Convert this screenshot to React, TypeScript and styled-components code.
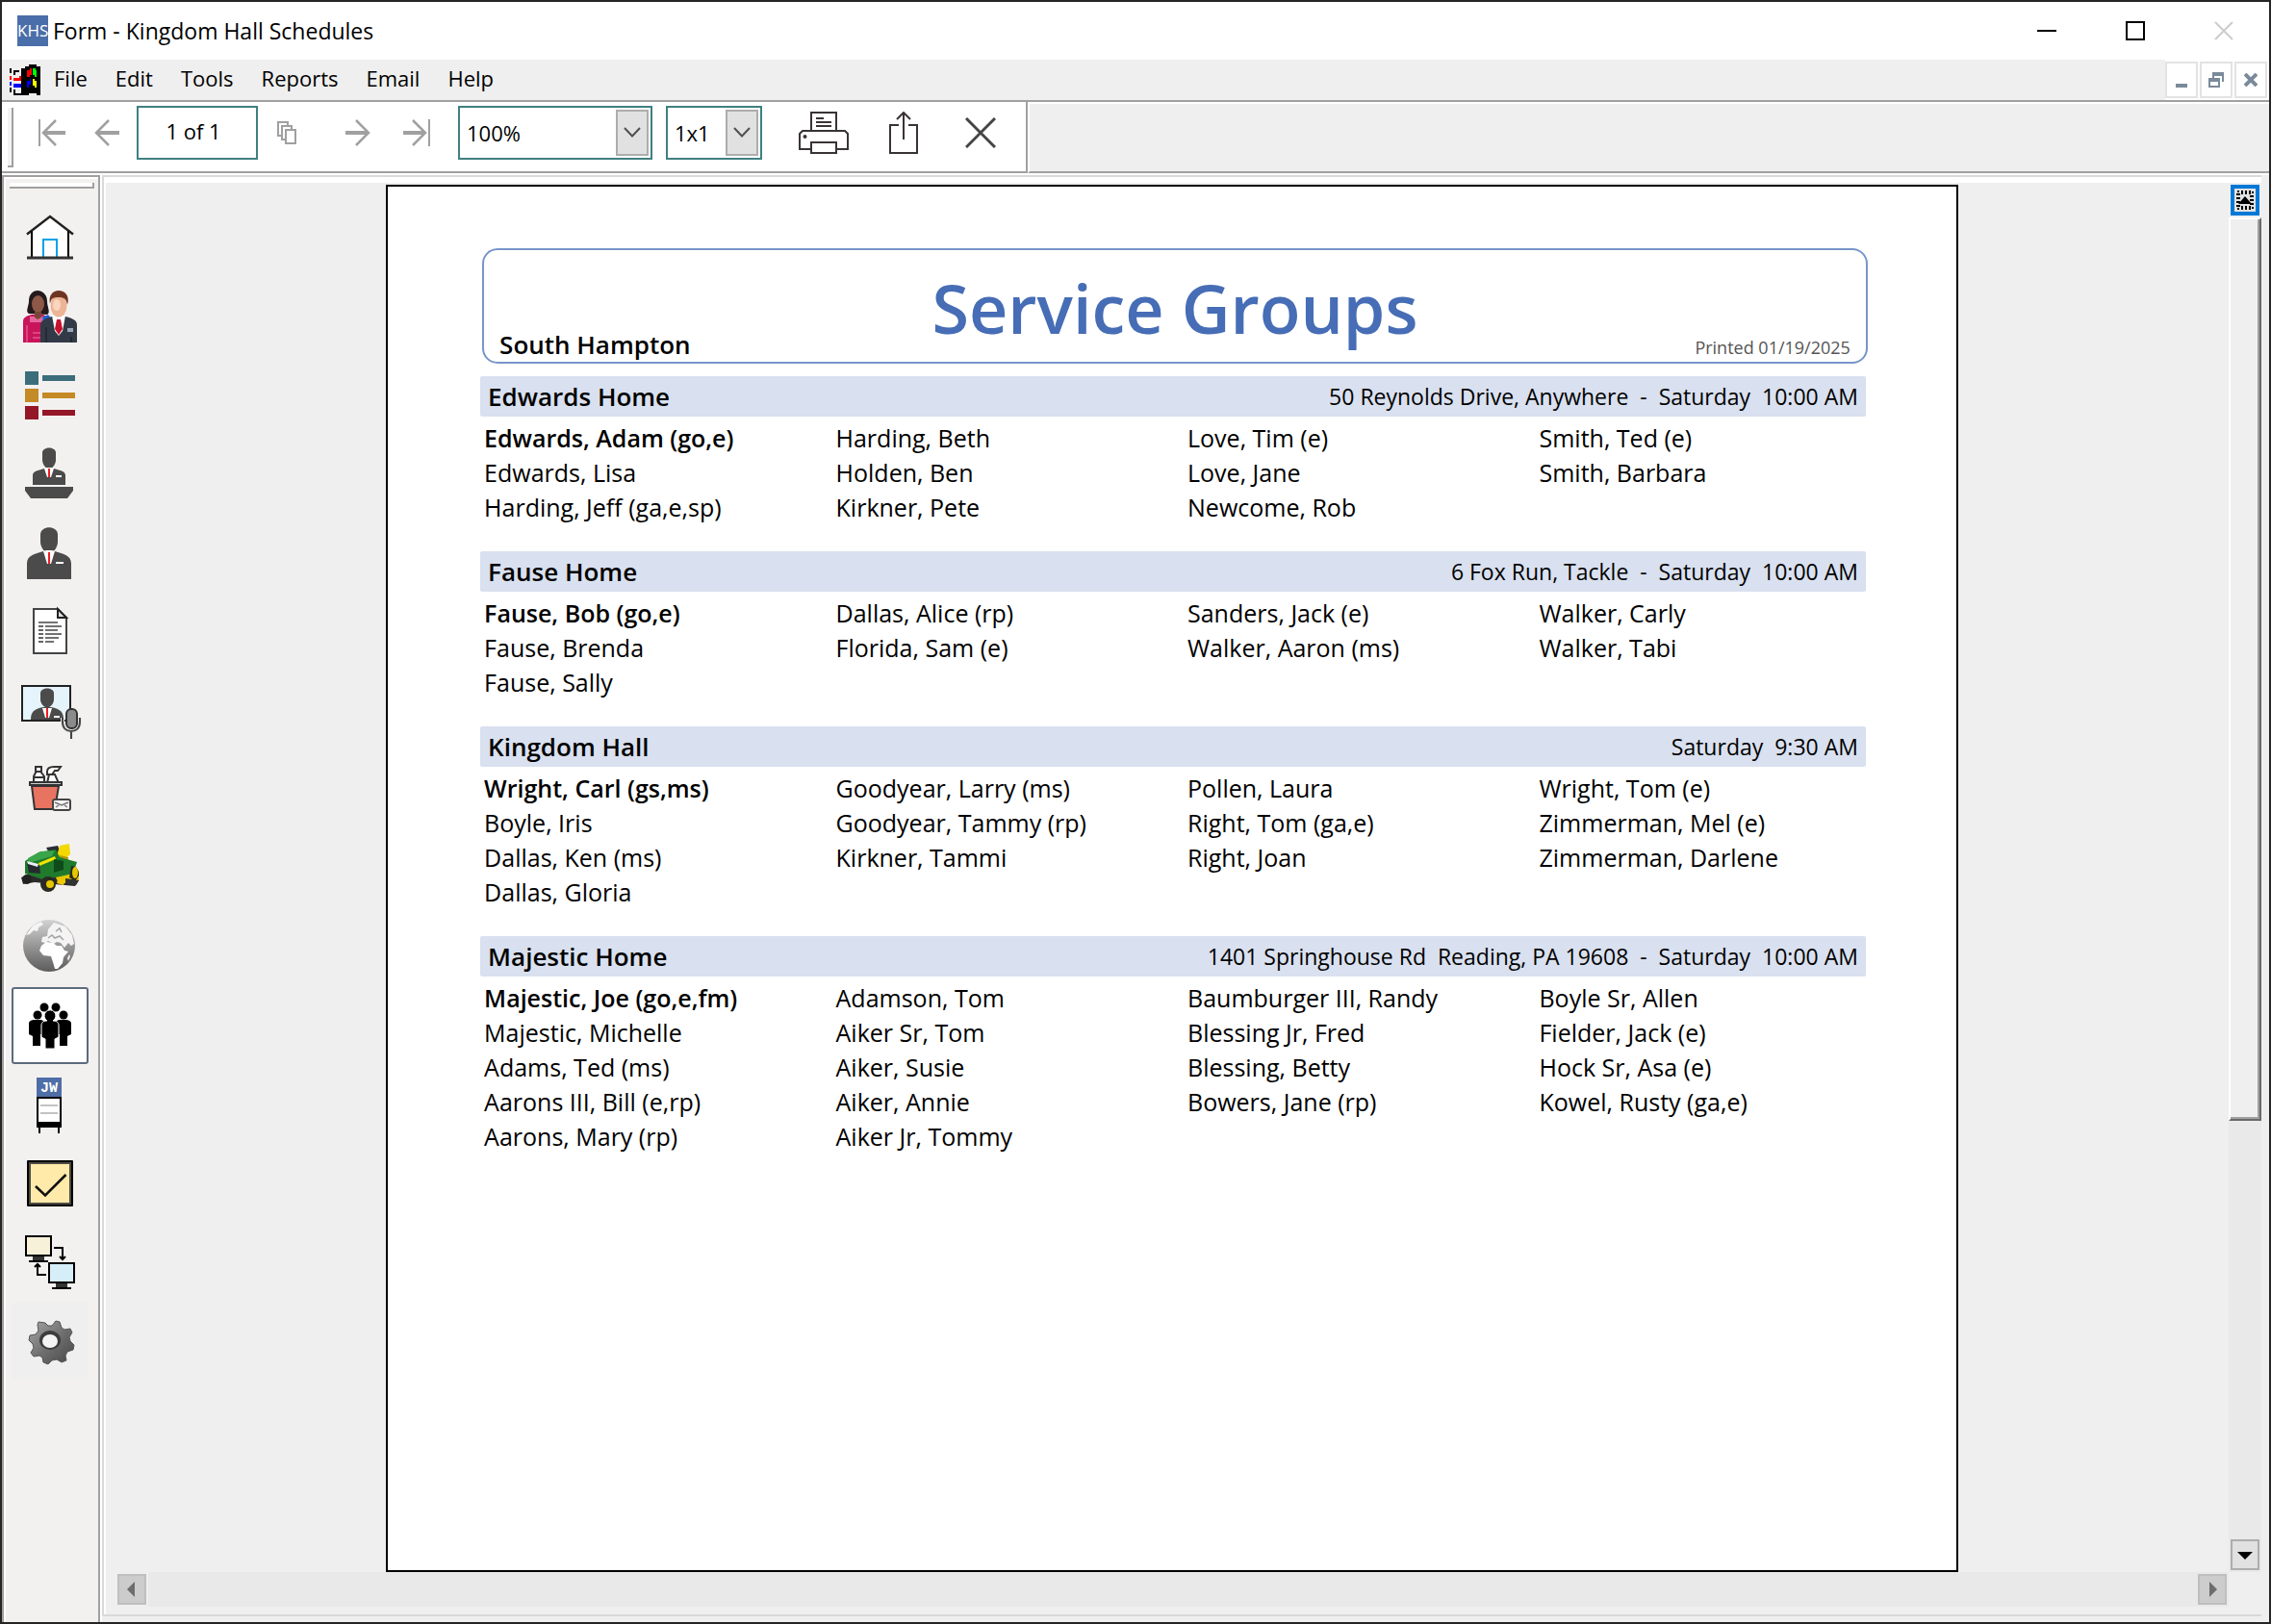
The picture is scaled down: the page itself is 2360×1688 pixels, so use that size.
import React from "react";
import styled, { createGlobalStyle, css } from "styled-components";

const GlobalStyle = createGlobalStyle`
  * { box-sizing: border-box; }
  body { margin: 0; background: #efefef; }
  body, button, input, select {
    font-family: "Open Sans", "Noto Sans", sans-serif;
    font-size: 23px;
    line-height: 32px;
    color: #000;
  }
  button, input, select { margin: 0; padding: 0; border: 0; border-radius: 0; background: transparent; }
  ul { list-style: none; margin: 0; padding: 0; }
  h1, h2, p { margin: 0; font-weight: inherit; }
  svg { display: block; }
`;

/* ---------- window frame ---------- */

const Window = styled.div`
  display: flex;
  flex-direction: column;
  height: 100vh;
  min-height: 1400px;
  border: 2px solid #262424;
  background: #efefef;
`;

const TitleBar = styled.header`
  display: flex;
  align-items: center;
  flex: none;
  height: 60px;
  padding: 0 1px 0 16px;
  background: #fff;
`;

const AppBadge = styled.span`
  display: grid;
  place-items: center;
  width: 32px;
  height: 32px;
  margin-right: 5px;
  background: #4a6ea9;
  color: #fff;
  font-size: 17px;
  line-height: 32px;
  overflow: hidden;
`;

const WindowTitle = styled.h1`
  flex: 1;
  font-size: 23px;
`;

const CaptionButton = styled.button`
  display: grid;
  place-items: center;
  width: 92px;
  height: 60px;
`;

const MenuBar = styled.nav`
  display: flex;
  align-items: center;
  flex: none;
  height: 42px;
  padding-left: 8px;
`;

const MenuItems = styled.div`
  display: flex;
  flex: 1;
  gap: 29px;
  margin-left: 14px;
  padding-bottom: 4px;
`;

const MenuButton = styled.button`
  font-size: 22px;
  line-height: 36px;
`;

const MdiButtons = styled.div`
  display: flex;
  gap: 2px;
  height: 42px;
  padding: 2px 2px 2px 0;
  background: #fff;
`;

const MdiButton = styled.button`
  display: grid;
  place-items: center;
  width: 34px;
  height: 38px;
  border: 2px solid #e3e3e3;
  background: #fff;
`;

/* ---------- toolbar ---------- */

const ToolStrip = styled.div`
  display: flex;
  flex: none;
  height: 78px;
  border-top: 2px solid #a0a0a0;
  border-bottom: 2px solid #fff;
`;

const ToolBar = styled.div`
  display: flex;
  padding: 4px 0 0 6px;
  background: #fff;
  border-right: 2px solid #a0a0a0;
  border-bottom: 2px solid #a0a0a0;
`;

const ToolFill = styled.div`
  flex: 1;
  border-top: 2px solid #fff;
  border-left: 2px solid #fff;
  border-bottom: 2px solid #a0a0a0;
`;

const ToolGrip = styled.span`
  width: 6px;
  height: 62px;
  margin: 2px 12px 0 0;
  border-right: 2px solid #a0a0a0;
  border-bottom: 2px solid #a0a0a0;
  background: #f3f3f3;
`;

const ToolButton = styled.button<{ $width: number; $gap?: number }>`
  display: grid;
  place-items: center;
  width: ${(p) => p.$width}px;
  height: 56px;
  margin-left: ${(p) => p.$gap ?? 0}px;
`;

const PageField = styled.input`
  width: 126px;
  height: 56px;
  padding: 0 8px 4px 0;
  border: 2px solid #408080;
  background: #fff;
  font-size: 22px;
  text-align: center;
`;

const Picker = styled.label<{ $width: number }>`
  display: grid;
  grid-template-columns: 1fr 34px 2px;
  align-items: center;
  width: ${(p) => p.$width}px;
  height: 56px;
  margin-right: 14px;
`;

const PickerSelect = styled.select`
  grid-area: 1 / 1 / 2 / 4;
  width: 100%;
  height: 56px;
  padding-left: 7px;
  border: 2px solid #408080;
  background: #fff;
  appearance: none;
  font-size: 22px;
`;

const PickerArrow = styled.span`
  grid-area: 1 / 2 / 2 / 3;
  display: grid;
  place-items: center;
  width: 34px;
  height: 48px;
  margin-left: -2px;
  border: 2px solid #adadad;
  background: #e1e1e1;
  pointer-events: none;
`;

/* ---------- body ---------- */

const Body = styled.div`
  display: flex;
  flex: 1;
  min-height: 0;
`;

const SideBar = styled.nav`
  display: flex;
  flex-direction: column;
  flex: none;
  width: 102px;
  margin-right: 2px;
  padding: 6px 0 0 4px;
  background: #f3f1f0;
  border: 2px solid #a0a0a0;
  border-bottom: 0;
  box-shadow: inset 2px 2px #fff, 2px 0 #fff;
`;

const SideGrip = styled.span`
  width: 88px;
  height: 6px;
  margin: 0 0 10px 2px;
  border-right: 2px solid #a0a0a0;
  border-bottom: 2px solid #a0a0a0;
  background: #fff;
`;

const SideItems = styled.ul`
  display: flex;
  flex-direction: column;
  gap: 2px;
  padding-left: 4px;
`;

const SideButton = styled.button<{ $state?: "selected" | "flat" }>`
  display: block;
  width: 80px;
  height: 80px;
  border-radius: 3px;
  ${(p) => p.$state === "selected" && css`
    background: #fff;
    box-shadow: inset 0 0 0 2px #5c6b7e;
  `}
  ${(p) => p.$state === "flat" && css`
    background: #efefef;
  `}
`;

const Workspace = styled.main`
  display: grid;
  flex: 1;
  grid-template-columns: 1fr 34px;
  grid-template-rows: 1fr 36px 8px;
  margin: 0 8px 6px 0;
  border-top: 2px solid #d9d9d9;
  border-left: 2px solid #d9d9d9;
  border-bottom: 2px solid #d9d9d9;
  box-shadow: inset 2px 6px #fff;
`;

const PaperArea = styled.div`
  display: flex;
  justify-content: center;
  padding: 8px 0 0 12px;
`;

const Paper = styled.article`
  width: 74.4%;
  border: 2px solid #000;
  background: #fff;
  padding: 64px 92px 0 96px;
`;

const VScroll = styled.div`
  display: flex;
  flex-direction: column;
  padding-bottom: 2px;
  margin-top: 6px;
  background: #e9e9e9;
`;

const VUpSlot = styled.div`
  padding: 2px;
  background: #efefef;
`;

const ScrollUp = styled.button`
  display: grid;
  place-items: center;
  width: 30px;
  height: 32px;
  border: 4px solid #0078d7;
  background: #e1e1e1;
`;

const VThumb = styled.div`
  flex: 938;
  border-top: 2px solid #fff;
  border-left: 2px solid #fff;
  border-right: 2px solid #696969;
  border-bottom: 2px solid #696969;
  box-shadow: inset -2px -2px #a0a0a0;
  background: #efefef;
`;

const VTrack = styled.div`
  flex: 436;
`;

const ScrollDown = styled.button`
  display: grid;
  place-items: center;
  width: 30px;
  height: 32px;
  margin-left: 2px;
  border: 2px solid #adadad;
  background: #e1e1e1;
`;

const HScroll = styled.div`
  display: flex;
  align-items: center;
  padding-left: 14px;
`;

const HTrack = styled.div`
  flex: 1;
  height: 36px;
  margin-left: 2px;
  background: #e9e9e9;
`;

const HButton = styled.button`
  display: grid;
  place-items: center;
  width: 30px;
  height: 32px;
  border: 2px solid #bfbfbf;
  background: #cccccc;
`;

const HEnd = styled.div`
  display: flex;
  align-items: center;
  height: 36px;
  padding-right: 2px;
  background: #e9e9e9;
`;

/* ---------- report ---------- */

const ReportHead = styled.header`
  display: grid;
  grid-template-columns: 1fr auto 1fr;
  align-items: end;
  height: 120px;
  margin: 0 0 13px 2px;
  padding: 0 16px;
  border: 2px solid #7895ca;
  border-radius: 16px;
`;

const Congregation = styled.p`
  font-size: 26px;
  font-weight: 600;
  line-height: 36px;
`;

const ReportTitle = styled.h2`
  margin-bottom: 8px;
  color: #466db5;
  font-size: 70px;
  font-weight: 600;
  line-height: 96px;
`;

const Printed = styled.p`
  color: #555;
  font-size: 18px;
  line-height: 30px;
  text-align: right;
`;

const Group = styled.section`
  margin: 0 2px 28px 0;
`;

const GroupBar = styled.header`
  display: flex;
  justify-content: space-between;
  align-items: center;
  height: 42px;
  margin-bottom: 4px;
  padding: 0 8px;
  border-radius: 2px;
  background: #d9e0ef;
`;

const GroupName = styled.h2`
  font-size: 26px;
  font-weight: 600;
`;

const GroupInfo = styled.p`
  font-size: 23px;
  white-space: pre;
`;

const GroupColumns = styled.div`
  display: grid;
  grid-template-columns: 365fr 365fr 365fr 339fr;
  padding-left: 4px;
`;

const Person = styled.li<{ $lead: boolean }>`
  font-size: 25px;
  font-weight: ${(p) => (p.$lead ? 600 : 400)};
  line-height: 36px;
  white-space: nowrap;
`;

/* ---------- data ---------- */

type GroupData = { name: string; info: string; columns: string[][] };

const groups: GroupData[] = [
  {
    name: "Edwards Home",
    info: "50 Reynolds Drive, Anywhere  -  Saturday  10:00 AM",
    columns: [
      ["Edwards, Adam (go,e)", "Edwards, Lisa", "Harding, Jeff (ga,e,sp)"],
      ["Harding, Beth", "Holden, Ben", "Kirkner, Pete"],
      ["Love, Tim (e)", "Love, Jane", "Newcome, Rob"],
      ["Smith, Ted (e)", "Smith, Barbara"],
    ],
  },
  {
    name: "Fause Home",
    info: "6 Fox Run, Tackle  -  Saturday  10:00 AM",
    columns: [
      ["Fause, Bob (go,e)", "Fause, Brenda", "Fause, Sally"],
      ["Dallas, Alice (rp)", "Florida, Sam (e)"],
      ["Sanders, Jack (e)", "Walker, Aaron (ms)"],
      ["Walker, Carly", "Walker, Tabi"],
    ],
  },
  {
    name: "Kingdom Hall",
    info: "Saturday  9:30 AM",
    columns: [
      ["Wright, Carl (gs,ms)", "Boyle, Iris", "Dallas, Ken (ms)", "Dallas, Gloria"],
      ["Goodyear, Larry (ms)", "Goodyear, Tammy (rp)", "Kirkner, Tammi"],
      ["Pollen, Laura", "Right, Tom (ga,e)", "Right, Joan"],
      ["Wright, Tom (e)", "Zimmerman, Mel (e)", "Zimmerman, Darlene"],
    ],
  },
  {
    name: "Majestic Home",
    info: "1401 Springhouse Rd  Reading, PA 19608  -  Saturday  10:00 AM",
    columns: [
      ["Majestic, Joe (go,e,fm)", "Majestic, Michelle", "Adams, Ted (ms)", "Aarons III, Bill (e,rp)", "Aarons, Mary (rp)"],
      ["Adamson, Tom", "Aiker Sr, Tom", "Aiker, Susie", "Aiker, Annie", "Aiker Jr, Tommy"],
      ["Baumburger III, Randy", "Blessing Jr, Fred", "Blessing, Betty", "Bowers, Jane (rp)"],
      ["Boyle Sr, Allen", "Fielder, Jack (e)", "Hock Sr, Asa (e)", "Kowel, Rusty (ga,e)"],
    ],
  },
];

const menus = ["File", "Edit", "Tools", "Reports", "Email", "Help"];

/* ---------- icons ---------- */

const Icon = ({ w = 80, h = 80, children }: { w?: number; h?: number; children: React.ReactNode }) => (
  <svg width={w} height={h} viewBox={`0 0 ${w} ${h}`} fill="none" aria-hidden="true">
    {children}
  </svg>
);

const FlagLogo = () => (
  <Icon w={32} h={32}>
    <path d="M12 4h4V2h4V0h8v2h4v30h-4v-2h-8v2h-8z" fill="#000" />
    <path d="M18 6h3v-2h2v7h-2v2h-3z" fill="#f00" />
    <path d="M24 4h3v2h1v7h-2v-2h-2z" fill="#0f0" />
    <path d="M18 17h3v-2h1v6h-2v3h-2z" fill="#00f" />
    <path d="M24 15h2v2h2v7h-2v-2h-2z" fill="#ff0" />
    <path d="M0 4h2v5H0zM4 6h6v2H6v3H4zM0 24h2v5H0zM4 26h2v4h6v2H4z" fill="#000" />
    <path d="M0 12h2v4H0zM4 14h6v-2h2v5H4z" fill="#f00" />
    <path d="M0 18h2v4H0zM4 20h8v4H4z" fill="#00f" />
  </Icon>
);

const Arrow = ({ flip, bar }: { flip?: boolean; bar?: boolean }) => (
  <Icon w={28} h={28}>
    <g stroke="#a0a0a0" transform={flip ? "translate(28 0) scale(-1 1)" : undefined}>
      {bar && <path d="M1 0v28" strokeWidth="2" />}
      <path d={bar ? "M5 14h23" : "M3 14h23"} strokeWidth="4" />
      <path d={bar ? "M18 1L5 14l13 13" : "M15 1L2 14l13 13"} strokeWidth="2.5" />
    </g>
  </Icon>
);

const CopyPages = () => (
  <Icon w={20} h={24}>
    <g stroke="#a0a0a0" strokeWidth="2" fill="#fff">
      <path d="M1 1h10v14H1z" />
      <path d="M5 5h10v14H5z" />
      <path d="M9 9h10v14H9z" />
    </g>
  </Icon>
);

const Chevron = () => (
  <Icon w={18} h={12}>
    <path d="M1 1l8 8.500 8-8.500" stroke="#505050" strokeWidth="2" />
  </Icon>
);

const Printer = () => (
  <Icon w={52} h={44}>
    <g stroke="#3a3335" strokeWidth="2">
      <path d="M13 20V1h26v19" />
      <path d="M18 7h8M18 11h16M18 15h16" />
      <path d="M13 39H1V23l3-3h44l3 3v16H39" />
      <path d="M13 32h26v11H13z" />
    </g>
    <circle cx="6.500" cy="26" r="2" fill="#3a3335" />
  </Icon>
);

const Share = () => (
  <Icon w={30} h={44}>
    <g stroke="#3a3335" strokeWidth="2">
      <path d="M10 14H1v29h28V14h-9" />
      <path d="M15 29V2M8 8l7-7 7 7" />
    </g>
  </Icon>
);

const Cross = ({ size, color, width = 2 }: { size: number; color: string; width?: number }) => (
  <Icon w={size} h={size}>
    <path d={`M1 1L${size - 1} ${size - 1}M${size - 1} 1L1 ${size - 1}`} stroke={color} strokeWidth={width} />
  </Icon>
);

const Triangle = ({ d, color = "#000" }: { d: string; color?: string }) => (
  <Icon w={18} h={18}>
    <path d={d} fill={color} />
  </Icon>
);

const HomeIcon = () => (
  <Icon>
    <path d="M21 33L40 19l19 14v29H21z" fill="#fff" />
    <path d="M16 37.500L40 19l24 18.500" stroke="#222" strokeWidth="2.500" />
    <path d="M21 34v28M59 34v28" stroke="#000" strokeWidth="2" />
    <path d="M33 61V43h14v18" stroke="#00a2e8" strokeWidth="2" />
    <path d="M16 62h48" stroke="#333" strokeWidth="3" />
  </Icon>
);

const PeopleIcon = () => (
  <Icon>
    <path d="M18 38c-4-2 0-8 0-13 0-7 4-11 9-11s10 4 10 11c0 6 4 12 0 14z" fill="#241a1c" />
    <path d="M12 68V46c0-4 4-6 9-7h12l6 4v25z" fill="#c9145a" />
    <path d="M19 41h18v6H19z" fill="#e667a0" />
    <path d="M16 50v18M22 58h10M22 63h10" stroke="#e2568d" strokeWidth="1.500" />
    <ellipse cx="27.500" cy="28" rx="6.500" ry="9" fill="#8d5847" />
    <path d="M24 36h7v6l-4 2-3-2z" fill="#7a4638" />
    <path d="M32 42l6-3 4 5-8 6z" fill="#1763d8" />
    <path d="M30 68V50c0-5 5-7 12-9h14c8 2 12 4 12 9v18z" fill="#323a47" />
    <path d="M42 40h14l-3 16-4 5-4-5z" fill="#fff" />
    <path d="M47 44h4l2 10-4 6-4-6z" fill="#c8102e" />
    <path d="M58 53h6v4h-6z" fill="#9aa7b8" />
    <path d="M36 52v16M62 62v6" stroke="#20252e" strokeWidth="1.500" />
    <ellipse cx="49" cy="30" rx="8.500" ry="11.500" fill="#edb595" />
    <ellipse cx="47" cy="29" rx="4" ry="6" fill="#f8d6c0" />
    <path d="M40 28c-2-9 3-14 9-14s12 5 9 15c-1-6-3-8-9-8s-8 1-9 7z" fill="#6f3524" />
  </Icon>
);

const ListIcon = () => (
  <Icon>
    <path d="M14 16h14v14H14zM32 20h34v6H32z" fill="#3b6d7a" />
    <path d="M14 34h14v14H14zM32 38h34v6H32z" fill="#c48a26" />
    <path d="M14 52h14v14H14zM32 56h34v6H32z" fill="#941728" />
  </Icon>
);

const PodiumIcon = () => (
  <Icon>
    <path d="M32 18c1-6 13-6 14 0v8c0 4-3 8-5 9h-4c-2-1-5-5-5-9z" fill="#4b4b4b" />
    <path d="M22 52V42c0-4 5-5 12-7h10c7 2 12 3 12 7v10z" fill="#4b4b4b" />
    <path d="M34 35l2-1h6l2 1-3 9h-4z" fill="#fff" />
    <path d="M39 35v9" stroke="#ed1c24" strokeWidth="2" />
    <path d="M46 43h6" stroke="#fff" strokeWidth="2" />
    <path d="M14 54h50v4l-6 8H20l-6-8z" fill="#4b4b4b" />
  </Icon>
);

const SpeakerIcon = () => (
  <Icon>
    <path d="M30 21c1-9 17-9 18 0v8c0 6-4 10-6 11h-6c-2-1-6-5-6-11z" fill="#4b4b4b" />
    <path d="M16 68V52c0-9 8-10 17-13h12c9 3 17 4 17 13v16z" fill="#4b4b4b" />
    <path d="M33 39l3-1h6l3 1-4 13h-4z" fill="#fff" />
    <path d="M39 40v12" stroke="#ed1c24" strokeWidth="2" />
    <path d="M46 51h8" stroke="#fff" strokeWidth="2" />
  </Icon>
);

const DocumentIcon = () => (
  <Icon>
    <path d="M23 17h25l9 9v37H23z" fill="#fff" stroke="#444" strokeWidth="2" />
    <path d="M48 17v9h9z" fill="#ddd" stroke="#222" strokeWidth="2" />
    <path d="M28 31h20" stroke="#444" strokeWidth="1.500" />
    <path d="M28 35h5M28 39h5M28 43h5M28 47h5M28 51h5" stroke="#333" strokeWidth="1.500" />
    <path d="M35 35h17M35 39h13M35 43h17M35 47h14M35 51h9" stroke="#444" strokeWidth="1.500" />
  </Icon>
);

const VideoIcon = () => (
  <Icon>
    <path d="M11 15h50v36H11z" fill="#e5f3fa" stroke="#222" strokeWidth="2" />
    <path d="M30 22c1-6 13-6 14 0v7c0 4-3 7-5 8h-4c-2-1-5-4-5-8z" fill="#4b4b4b" />
    <path d="M20 50c0-8 3-11 13-13h8c10 2 13 5 13 13z" fill="#4b4b4b" />
    <path d="M32 38h10l-3 10h-4z" fill="#fff" />
    <path d="M37 38v10" stroke="#ed1c24" strokeWidth="2" />
    <path d="M44 47h6" stroke="#fff" strokeWidth="2" />
    <path d="M53 48v4c0 7 4 10 9 10s9-3 9-10v-4M62 62v8" stroke="#e8e8e8" strokeWidth="4" />
    <path d="M53 48v4c0 7 4 10 9 10s9-3 9-10v-4M62 62v8" stroke="#444" strokeWidth="2" />
    <rect x="57" y="39" width="11" height="20" rx="5" fill="#8b8b8b" stroke="#333" strokeWidth="2" />
  </Icon>
);

const CleaningIcon = () => (
  <Icon>
    <path d="M25 17h6v6l3 4v7H23v-7l2-4zM24 22h8M23 28h11" fill="#fff" stroke="#333" strokeWidth="2" />
    <path d="M37 22c0-4 3-5 7-5h7l-3 4h-3l-3 4h-5zM39 25h6l4 9H37z" fill="#fff" stroke="#333" strokeWidth="2" />
    <path d="M21 37h28l-4 24H24z" fill="#e97361" stroke="#333" strokeWidth="2" />
    <path d="M19 33h33v3H19z" fill="#ccc" stroke="#333" strokeWidth="2" />
    <rect x="43" y="51" width="18" height="11" rx="2" fill="#f4f4f4" stroke="#444" strokeWidth="2" />
    <path d="M45 54l7 3 7-3M46 59l3-2M58 59l-3-2" stroke="#777" strokeWidth="1.500" />
  </Icon>
);

const MowerIcon = () => (
  <Icon>
    <path d="M10 50l8-3h44l8 6-4 6-22-2-20-2-12 2z" fill="#2b2b2b" />
    <path d="M44 47l18-10 8 6v10l-20 4z" fill="#e6c700" />
    <path d="M36 19l12-2 4 9-8 8z" fill="#2a2d33" />
    <path d="M50 17l10-2 1 11-6 5-8-3z" fill="#f4d800" />
    <path d="M50 27l9 2v4l-10-2z" fill="#b89b00" />
    <path d="M14 33l14-9 18-3 4 8 18 5-4 12-18 4-14 2-18-6z" fill="#1f7a2c" />
    <path d="M17 30l13-7 15-1-3 6-24 7z" fill="#3aa54a" />
    <path d="M28 35l17-7 1 3-17 7z" fill="#f3e500" />
    <path d="M16 35l13 2 1 9-12-1z" fill="#262a30" />
    <path d="M16 33l12 3-1 3-10-3z" fill="#e9eef0" />
    <path d="M44 31l10 2v9l-10 3z" fill="#0f4a1a" />
    <circle cx="16" cy="52" r="5" fill="#222" />
    <circle cx="38" cy="57" r="8" fill="#2a2a22" />
    <circle cx="40" cy="57" r="4" fill="#e6c700" />
    <path d="M62 38c6 0 8 5 8 10l-4 6-6-4z" fill="#2a2a22" />
    <ellipse cx="66" cy="45" rx="3" ry="6" fill="#e6c700" />
    <path d="M48 52l8 1-2 5-7-2z" fill="#f0c800" />
    <path d="M56 51l14 2-3 5-11-2z" fill="#333" />
  </Icon>
);

const GlobeIcon = () => (
  <Icon>
    <defs>
      <linearGradient id="globe" x1="0" y1="0" x2="0" y2="1">
        <stop offset="0" stopColor="#d2d2d2" />
        <stop offset="1" stopColor="#5c5c5c" />
      </linearGradient>
    </defs>
    <circle cx="39" cy="39" r="27" fill="url(#globe)" />
    <path d="M20 21c3-4 7-6 11-7l2 3-5 3-1 4-4-1-4 4-4 1z" fill="#f4f4f4" />
    <path d="M38 22l6-7 12 4 7 9 2 9-3 2-3-3-4 5-4-5-4-1-3 2-6-3-3 2-4-1 1-5 5-1z" fill="#f4f4f4" />
    <path d="M31 39l5-4 7 1 4 3h5l3 5 4 1-5 6-1 6-5 6h-3l-2-7-2-6-8-1-4-5z" fill="#fff" />
    <path d="M38 31l4-3 3 3 5-2 4 4M46 24l4-3 2 4" stroke="#a4a4a4" strokeWidth="1.500" />
    <path d="M58 52l2-4 1 2-2 5z" fill="#f4f4f4" />
  </Icon>
);

const GroupsIcon = () => (
  <Icon>
    <g fill="#000">
      <circle cx="34" cy="21" r="4.500" />
      <circle cx="46" cy="21" r="4.500" />
      <circle cx="27" cy="29" r="4.500" />
      <circle cx="54" cy="29" r="4.500" />
      <path d="M18 38c0-3 3-4 6-4h5c4 0 5 2 5 4v11h-4v12h-8V51l-4-2z" />
      <path d="M62 38c0-3-3-4-6-4h-5c-4 0-5 2-5 4v11h4v12h8V51l4-2z" />
    </g>
    <path d="M31 40c0-4 3-5 6-5a6 6 0 1 1 6 0c3 0 6 1 6 5v12l-4 2v10H35V54l-4-2z" fill="#000" stroke="#fff" strokeWidth="1" />
  </Icon>
);

const JwLetters = styled.text`
  font-family: "Liberation Mono", monospace;
  font-size: 15px;
  font-weight: 700;
`;

const CartIcon = () => (
  <Icon>
    <path d="M26 12h26v20H26z" fill="#4f6da6" />
    <JwLetters x="39" y="27" textAnchor="middle" fill="#fff">JW</JwLetters>
    <path d="M26 32h26v32H26z" fill="#000" />
    <path d="M28 34h22v24H28z" fill="#fff" />
    <path d="M30 41h18M30 49h18" stroke="#c3c3c3" strokeWidth="2" />
    <path d="M29 64v6M49 64v6" stroke="#000" strokeWidth="2" />
  </Icon>
);

const TaskIcon = () => (
  <Icon>
    <rect x="16" y="16" width="48" height="48" rx="1" fill="#000" />
    <path d="M18 18h44v44H18z" fill="#4d4a42" />
    <path d="M20 20h40v40H20z" fill="#ffeaaa" />
    <path d="M25 43l10 9.500L56.500 31" stroke="#111" strokeWidth="2.500" />
  </Icon>
);

const SyncIcon = () => (
  <Icon>
    <path d="M22 34h12v5H22zM46 62h12v5H46z" fill="#333" />
    <path d="M18 39h20M42 67h20" stroke="#000" strokeWidth="2" />
    <path d="M15 13h26v20H15z" fill="#f8f1da" stroke="#000" strokeWidth="2" />
    <path d="M39 41h26v20H39z" fill="#d6eef8" stroke="#000" strokeWidth="2" />
    <path d="M44 25h9v12M50 34l3 3 3-3M36 53h-9V42M24 45l3-3 3 3" stroke="#000" strokeWidth="2" />
  </Icon>
);

const GearIcon = () => (
  <Icon>
    <defs>
      <linearGradient id="gear" x1="0" y1="0" x2="1" y2="1">
        <stop offset="0" stopColor="#a8a8a8" />
        <stop offset="0.500" stopColor="#707070" />
        <stop offset="1" stopColor="#454545" />
      </linearGradient>
    </defs>
    <path
      d="M28 20l7 1 3 3h4l4-5 4 1 2 6 3 2 6-1 2 4-3 5 1 4 4 4-1 5-6 2-2 4 1 5-5 2-5-3-5 1-4 4-5-2-1-5-3-2-6 1-3-4 3-5-1-4-4-4 1-5 6-1 3-4-1-6z"
      fill="url(#gear)"
      stroke="#555"
      strokeWidth="1"
    />
    <ellipse cx="40" cy="39" rx="11" ry="10" fill="#3c3c3c" />
    <ellipse cx="40" cy="40" rx="8" ry="7" fill="#f4f4f4" />
  </Icon>
);

const sideItems: { label: string; icon: React.ReactNode; state?: "selected" | "flat" }[] = [
  { label: "Home", icon: <HomeIcon /> },
  { label: "People", icon: <PeopleIcon /> },
  { label: "Assignments", icon: <ListIcon /> },
  { label: "Public talks", icon: <PodiumIcon /> },
  { label: "Speakers", icon: <SpeakerIcon /> },
  { label: "Documents", icon: <DocumentIcon /> },
  { label: "Audio and video", icon: <VideoIcon /> },
  { label: "Cleaning", icon: <CleaningIcon /> },
  { label: "Grounds", icon: <MowerIcon /> },
  { label: "Territory", icon: <GlobeIcon /> },
  { label: "Service groups", icon: <GroupsIcon />, state: "selected" },
  { label: "Carts", icon: <CartIcon /> },
  { label: "Tasks", icon: <TaskIcon /> },
  { label: "Sync", icon: <SyncIcon /> },
  { label: "Settings", icon: <GearIcon />, state: "flat" },
];

/* ---------- app ---------- */

const Dropdown = ({ label, value, width }: { label: string; value: string; width: number }) => (
  <Picker $width={width}>
    <PickerSelect aria-label={label} defaultValue={value}>
      <option>{value}</option>
    </PickerSelect>
    <PickerArrow>
      <Chevron />
    </PickerArrow>
  </Picker>
);

const ServiceGroup = ({ group }: { group: GroupData }) => (
  <Group>
    <GroupBar>
      <GroupName>{group.name}</GroupName>
      <GroupInfo>{group.info}</GroupInfo>
    </GroupBar>
    <GroupColumns>
      {group.columns.map((names, c) => (
        <ul key={c}>
          {names.map((n, r) => (
            <Person key={n} $lead={c === 0 && r === 0}>{n}</Person>
          ))}
        </ul>
      ))}
    </GroupColumns>
  </Group>
);

export default function App() {
  return (
    <>
      <GlobalStyle />
      <Window>
        <TitleBar>
          <AppBadge>KHS</AppBadge>
          <WindowTitle>Form - Kingdom Hall Schedules</WindowTitle>
          <CaptionButton aria-label="Minimize">
            <Icon w={20} h={20}><path d="M0 10h20" stroke="#000" strokeWidth="2" /></Icon>
          </CaptionButton>
          <CaptionButton aria-label="Maximize">
            <Icon w={20} h={20}><path d="M1 1h18v18H1z" stroke="#000" strokeWidth="2" /></Icon>
          </CaptionButton>
          <CaptionButton aria-label="Close"><Cross size={20} color="#cccccc" /></CaptionButton>
        </TitleBar>

        <MenuBar>
          <FlagLogo />
          <MenuItems>
            {menus.map((m) => <MenuButton key={m}>{m}</MenuButton>)}
          </MenuItems>
          <MdiButtons>
            <MdiButton aria-label="Minimize form">
              <Icon w={16} h={16}><path d="M2 14h12" stroke="#7b8a9a" strokeWidth="4" /></Icon>
            </MdiButton>
            <MdiButton aria-label="Restore form">
              <Icon w={16} h={16}>
                <path d="M4 6V0h12v10h-2V4H6v2z" fill="#7b8a9a" />
                <path d="M0 6h12v10H0zM2 10v4h8v-4z" fill="#7b8a9a" fillRule="evenodd" />
              </Icon>
            </MdiButton>
            <MdiButton aria-label="Close form"><Cross size={14} color="#7b8a9a" width={4} /></MdiButton>
          </MdiButtons>
        </MenuBar>

        <ToolStrip>
          <ToolBar>
            <ToolGrip />
            <ToolButton $width={56} aria-label="First page"><Arrow bar /></ToolButton>
            <ToolButton $width={60} aria-label="Previous page"><Arrow /></ToolButton>
            <PageField aria-label="Page" defaultValue="1 of 1" />
            <ToolButton $width={60} aria-label="Copy"><CopyPages /></ToolButton>
            <ToolButton $width={38} $gap={24} aria-label="Next page"><Arrow flip /></ToolButton>
            <ToolButton $width={86} aria-label="Last page"><Arrow flip bar /></ToolButton>
            <Dropdown label="Zoom" value="100%" width={202} />
            <Dropdown label="Pages shown" value="1x1" width={100} />
            <ToolButton $width={100} aria-label="Print"><Printer /></ToolButton>
            <ToolButton $width={66} aria-label="Export"><Share /></ToolButton>
            <ToolButton $width={94} aria-label="Close preview"><Cross size={32} color="#444" width={3} /></ToolButton>
          </ToolBar>
          <ToolFill />
        </ToolStrip>

        <Body>
          <SideBar>
            <SideGrip />
            <SideItems>
              {sideItems.map((s) => (
                <li key={s.label}>
                  <SideButton aria-label={s.label} $state={s.state}>{s.icon}</SideButton>
                </li>
              ))}
            </SideItems>
          </SideBar>

          <Workspace>
            <PaperArea>
              <Paper>
                <ReportHead>
                  <Congregation>South Hampton</Congregation>
                  <ReportTitle>Service Groups</ReportTitle>
                  <Printed>Printed 01/19/2025</Printed>
                </ReportHead>
                {groups.map((g) => <ServiceGroup key={g.name} group={g} />)}
              </Paper>
            </PaperArea>
            <VScroll>
              <VUpSlot>
                <ScrollUp aria-label="Scroll up">
                  <Icon w={18} h={20}>
                    <path d="M1 1h16v18H1z" stroke="#000" strokeWidth="2" strokeDasharray="2 2" />
                    <path d="M3 3h12v14H3z" stroke="#000" strokeWidth="2" strokeDasharray="2 2" strokeDashoffset="2" />
                    <path d="M2 14l7-8 7 8z" fill="#000" />
                  </Icon>
                </ScrollUp>
              </VUpSlot>
              <VThumb />
              <VTrack />
              <ScrollDown aria-label="Scroll down"><Triangle d="M1 6h16l-8 8z" /></ScrollDown>
            </VScroll>
            <HScroll>
              <HButton aria-label="Scroll left"><Triangle d="M12 1v16L4 9z" color="#6d6d6d" /></HButton>
              <HTrack />
              <HEnd>
                <HButton aria-label="Scroll right"><Triangle d="M6 1v16l8-8z" color="#6d6d6d" /></HButton>
              </HEnd>
            </HScroll>
          </Workspace>
        </Body>
      </Window>
    </>
  );
}
